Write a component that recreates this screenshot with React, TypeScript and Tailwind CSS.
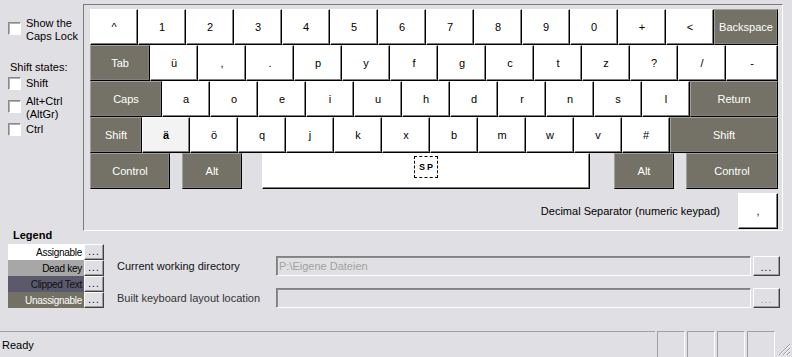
import React from "react";

type KeyDef = { l: string; w: string; k?: "dark" | "dead" | "space" | "gap" };

const W = "w-[48px]";

const rows: KeyDef[][] = [
  [
    { l: "^", w: W }, { l: "1", w: W }, { l: "2", w: W }, { l: "3", w: W }, { l: "4", w: W },
    { l: "5", w: W }, { l: "6", w: W }, { l: "7", w: W }, { l: "8", w: W }, { l: "9", w: W },
    { l: "0", w: W }, { l: "+", w: W }, { l: "<", w: W }, { l: "Backspace", w: "w-[64px]", k: "dark" },
  ],
  [
    { l: "Tab", w: "w-[60px]", k: "dark" }, { l: "ü", w: W }, { l: ",", w: W }, { l: ".", w: W },
    { l: "p", w: W }, { l: "y", w: W }, { l: "f", w: W }, { l: "g", w: W }, { l: "c", w: W },
    { l: "t", w: W }, { l: "z", w: W }, { l: "?", w: W }, { l: "/", w: W }, { l: "-", w: "w-[52px]" },
  ],
  [
    { l: "Caps", w: "w-[72px]", k: "dark" }, { l: "a", w: W }, { l: "o", w: W }, { l: "e", w: W },
    { l: "i", w: W }, { l: "u", w: W }, { l: "h", w: W }, { l: "d", w: W }, { l: "r", w: W },
    { l: "n", w: W }, { l: "s", w: W }, { l: "l", w: W }, { l: "Return", w: "w-[88px]", k: "dark" },
  ],
  [
    { l: "Shift", w: "w-[52px]", k: "dark" }, { l: "ä", w: W, k: "dead" }, { l: "ö", w: W },
    { l: "q", w: W }, { l: "j", w: W }, { l: "k", w: W }, { l: "x", w: W }, { l: "b", w: W },
    { l: "m", w: W }, { l: "w", w: W }, { l: "v", w: W }, { l: "#", w: W },
    { l: "Shift", w: "w-[108px]", k: "dark" },
  ],
  [
    { l: "Control", w: "w-[80px]", k: "dark" }, { l: "", w: "w-[12px]", k: "gap" },
    { l: "Alt", w: "w-[60px]", k: "dark" }, { l: "", w: "w-[20px]", k: "gap" },
    { l: "", w: "w-[328px]", k: "space" }, { l: "", w: "w-[24px]", k: "gap" },
    { l: "Alt", w: "w-[60px]", k: "dark" }, { l: "", w: "w-[12px]", k: "gap" },
    { l: "Control", w: "w-[92px]", k: "dark" },
  ],
];

function Key({ d }: { d: KeyDef }) {
  if (d.k === "gap") return <div className={`${d.w} shrink-0`} />;
  const edge =
    d.k === "dark"
      ? "bg-[#747266] text-white border-t-[#a3a197] border-l-[#a3a197]"
      : d.k === "dead"
      ? "bg-[#f3f3f3] text-black font-bold border-t-white border-l-white"
      : "bg-white text-black border-t-white border-l-white";
  return (
    <div
      className={`${d.w} h-[36px] shrink-0 flex justify-center border border-r-black border-b-black shadow-[inset_-1px_-1px_#808080] ${edge} ${
        d.k === "space" ? "items-start pt-[2px]" : "items-center"
      }`}
    >
      {d.k === "space" ? (
        <div className="w-[24px] h-[22px] border border-dashed border-black flex items-center justify-center text-[9px] font-bold tracking-[2px] pl-[2px]">
          SP
        </div>
      ) : (
        d.l
      )}
    </div>
  );
}

function Check({ className = "" }: { className?: string }) {
  return (
    <div
      className={`w-[13px] h-[13px] shrink-0 bg-white border border-t-[#8a8a8a] border-l-[#8a8a8a] border-r-white border-b-white shadow-[inset_1px_1px_#b0b0b0] ${className}`}
    />
  );
}

function Dots({ off = false, className = "" }: { off?: boolean; className?: string }) {
  return (
    <div
      className={`shrink-0 flex items-end justify-center pb-[2px] bg-[#e0dfe3] border border-t-white border-l-white border-r-[#404040] border-b-[#404040] shadow-[inset_-1px_-1px_#9d9d9d] text-[10px] leading-[10px] tracking-[1px] ${
        off ? "text-[#a0a0a0]" : "text-black"
      } ${className}`}
    >
      ...
    </div>
  );
}

const legend = [
  { l: "Assignable", c: "bg-white text-black" },
  { l: "Dead key", c: "bg-[#a7a7a7] text-black" },
  { l: "Clipped Text", c: "bg-[#5b5a6c] text-[#111]" },
  { l: "Unassignable", c: "bg-[#737163] text-white" },
];

export default function App() {
  return (
    <div className="w-[792px] h-[357px] bg-[#e0dfe3] flex flex-col overflow-hidden text-[11px] leading-[13px] text-black font-['Liberation_Sans',Arial,sans-serif]">
      {/* Top: options + keyboard */}
      <div className="flex h-[231px] shrink-0">
        <div className="w-[83px] shrink-0 flex flex-col pl-[8px]">
          <div className="mt-[17px] flex items-start gap-[5px]">
            <Check className="mt-[5px]" />
            <div>Show the<br />Caps Lock</div>
          </div>
          <div className="mt-[18px] pl-[2px]">Shift states:</div>
          <div className="mt-[3px] flex items-center gap-[5px]">
            <Check />
            <span>Shift</span>
          </div>
          <div className="mt-[5px] flex items-start gap-[5px]">
            <Check className="mt-[5px]" />
            <div>Alt+Ctrl<br />(AltGr)</div>
          </div>
          <div className="mt-[2px] flex items-center gap-[5px]">
            <Check />
            <span>Ctrl</span>
          </div>
        </div>

        <div className="mt-[4px] w-[700px] h-[227px] shrink-0 border border-t-[#7a7a7a] border-l-[#7a7a7a] border-r-white border-b-white pt-[4px] pl-[6px] flex flex-col">
          {rows.map((r, i) => (
            <div key={i} className="flex w-[688px]">
              {r.map((d, j) => (
                <Key key={j} d={d} />
              ))}
            </div>
          ))}
          <div className="mt-[4px] w-[688px] flex items-center justify-end gap-[18px]">
            <span>Decimal Separator (numeric keypad)</span>
            <Key d={{ l: ",", w: "w-[40px]" }} />
          </div>
        </div>
      </div>

      {/* Legend + directories */}
      <div className="flex h-[100px] shrink-0">
        <div className="w-[104px] shrink-0 pl-[8px] -mt-[2px] flex flex-col">
          <div className="pl-[5px] font-bold">Legend</div>
          <div className="mt-[2px] flex flex-col">
            {legend.map((g) => (
              <div key={g.l} className="flex h-[16px]">
                <div className={`w-[76px] h-[16px] flex items-center justify-end pr-[2px] text-[10px] tracking-[-0.3px] ${g.c}`}>
                  {g.l}
                </div>
                <Dots className="w-[20px] h-[16px]" />
              </div>
            ))}
          </div>
        </div>

        <div className="ml-[13px] pt-[25px] flex flex-col gap-[12px]">
          <div className="flex items-center h-[20px]">
            <span className="w-[159px] shrink-0 text-[#111]">Current working directory</span>
            <div className="w-[475px] h-[20px] border border-t-[#808080] border-l-[#808080] border-r-white border-b-white shadow-[inset_1px_1px_#8c8c8c] flex items-center pl-[2px] text-[#a3a29a]">
              P:\Eigene Dateien
            </div>
            <Dots className="ml-[2px] w-[27px] h-[20px]" />
          </div>
          <div className="flex items-center h-[20px]">
            <span className="w-[159px] shrink-0 text-[#333]">Built keyboard layout location</span>
            <div className="w-[475px] h-[20px] border border-t-[#808080] border-l-[#808080] border-r-white border-b-white shadow-[inset_1px_1px_#8c8c8c]" />
            <Dots off className="ml-[2px] w-[27px] h-[20px]" />
          </div>
        </div>
      </div>

      {/* Status bar */}
      <div className="h-[26px] flex shrink-0">
        <div className="w-[655px] shrink-0 border-t border-[#a0a0a0] pl-[2px] pt-[7px]">Ready</div>
        {[0, 1, 2, 3].map((i) => (
          <div
            key={i}
            className="ml-[2px] first:ml-[1px] w-[28px] shrink-0 border-t border-l border-t-[#a0a0a0] border-l-[#a0a0a0] border-r border-r-white"
          />
        ))}
        <div className="flex-1 flex items-end justify-end pr-[1px] pb-[1px]">
          <svg width="13" height="13" viewBox="0 0 13 13">
            <path d="M12 1L1 12M12 5L5 12M12 9L9 12" stroke="#9c9c9c" strokeWidth="1" />
            <path d="M12 2L2 12M12 6L6 12M12 10L10 12" stroke="#ffffff" strokeWidth="1" />
          </svg>
        </div>
      </div>
    </div>
  );
}
